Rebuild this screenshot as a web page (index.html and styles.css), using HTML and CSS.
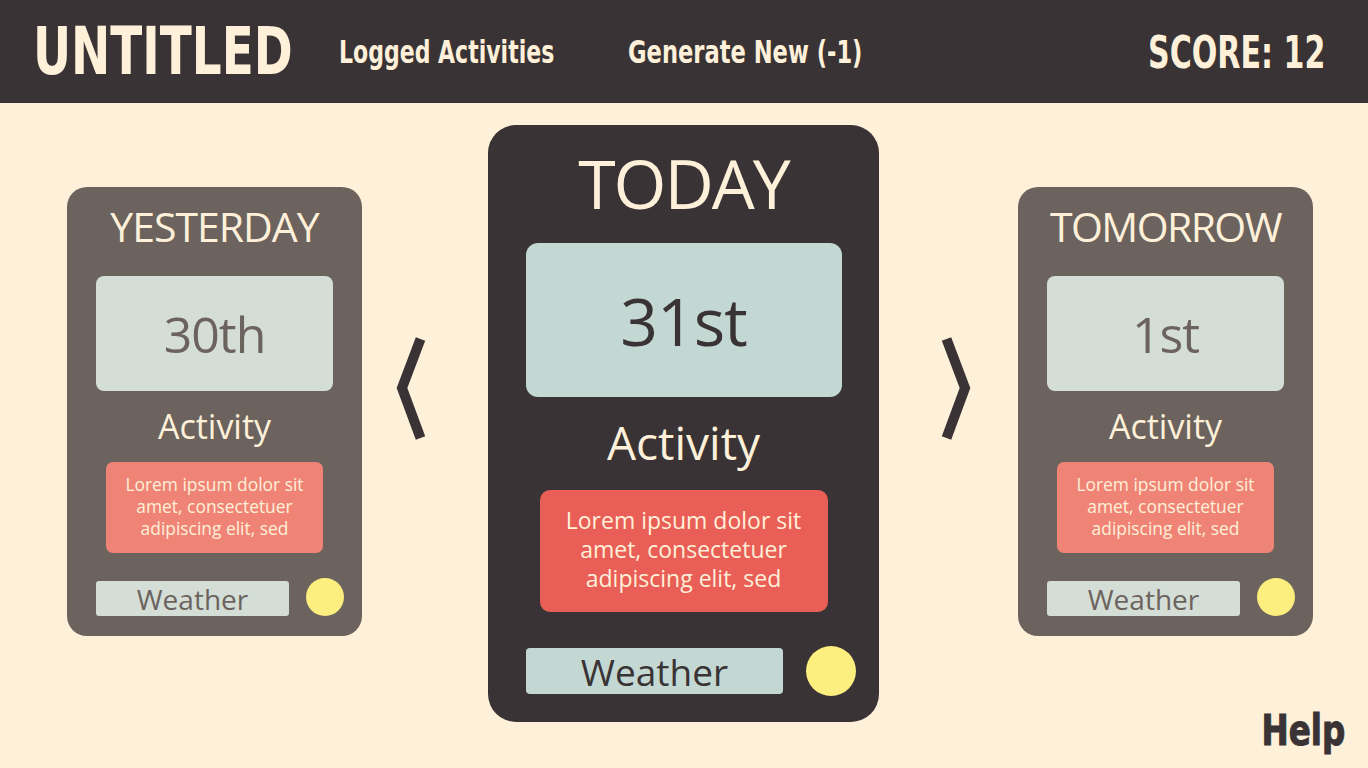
FILE: index.html
```html
<!DOCTYPE html>
<html lang="en">
<head>
<meta charset="utf-8">
<title>Untitled</title>
<link rel="stylesheet" href="styles.css">
</head>
<body>
<header class="topbar">
  <div class="brand"><span class="squeeze">UNTITLED</span></div>
  <nav class="nav">
    <a class="nav-link nav-logged" href="#"><span class="squeeze">Logged Activities</span></a>
    <a class="nav-link nav-generate" href="#"><span class="squeeze">Generate New (-1)</span></a>
  </nav>
  <div class="score"><span class="squeeze squeeze-right">SCORE: 12</span></div>
</header>
<main class="days">
  <section class="card card-side">
    <h2 class="card-title">YESTERDAY</h2>
    <div class="date-box">30th</div>
    <h3 class="activity-label">Activity</h3>
    <div class="activity-box">Lorem ipsum dolor sit<br>amet, consectetuer<br>adipiscing elit, sed</div>
    <div class="weather-row">
      <div class="weather-box">Weather</div>
      <div class="sun"></div>
    </div>
  </section>
  <div class="nav-arrow arrow-left">
    <svg width="40" height="110" viewBox="0 0 40 110"><polyline points="30.5,5 12,54 30.5,104" fill="none" stroke="#393335" stroke-width="10" stroke-linejoin="miter"/></svg>
  </div>
  <section class="card card-main">
    <h2 class="card-title">TODAY</h2>
    <div class="date-box">31st</div>
    <h3 class="activity-label">Activity</h3>
    <div class="activity-box">Lorem ipsum dolor sit<br>amet, consectetuer<br>adipiscing elit, sed</div>
    <div class="weather-row">
      <div class="weather-box">Weather</div>
      <div class="sun"></div>
    </div>
  </section>
  <div class="nav-arrow arrow-right">
    <svg width="40" height="110" viewBox="0 0 40 110"><polyline points="9.5,5 28,54 9.5,104" fill="none" stroke="#393335" stroke-width="10" stroke-linejoin="miter"/></svg>
  </div>
  <section class="card card-side">
    <h2 class="card-title title-tomorrow">TOMORROW</h2>
    <div class="date-box">1st</div>
    <h3 class="activity-label">Activity</h3>
    <div class="activity-box">Lorem ipsum dolor sit<br>amet, consectetuer<br>adipiscing elit, sed</div>
    <div class="weather-row">
      <div class="weather-box">Weather</div>
      <div class="sun"></div>
    </div>
  </section>
</main>
<a class="help" href="#"><span class="squeeze squeeze-right">Help</span></a>
</body>
</html>
```
FILE: styles.css
```css
* { box-sizing: border-box; margin: 0; padding: 0; }

html, body {
  width: 1368px;
  height: 768px;
  overflow: hidden;
}

body {
  background: #fef0d9;
  font-family: "Open Sans", "Noto Sans", sans-serif;
  color: #fef0d9;
  position: relative;
}

.squeeze {
  display: inline-block;
  white-space: nowrap;
  transform-origin: left top;
}

.squeeze-right { transform-origin: right top; }

.topbar {
  height: 103px;
  background: #393335;
  display: flex;
  align-items: flex-start;
  padding: 0 43px 0 33px;
  font-family: "DejaVu Sans Condensed", "DejaVu Sans", sans-serif;
  font-weight: 700;
  color: #fef0d9;
  line-height: 1;
}

.brand {
  width: 306px;
  font-size: 66px;
  margin-top: 19px;
}

.brand .squeeze { transform: scaleX(0.79); }

.nav {
  display: flex;
  margin-top: 36px;
}

.nav-link {
  color: #fef0d9;
  text-decoration: none;
  font-size: 32px;
  line-height: 1;
}

.nav-logged { width: 289px; }
.nav-logged .squeeze { transform: scaleX(0.765); }
.nav-generate .squeeze { transform: scaleX(0.785); }

.score {
  margin-left: auto;
  margin-top: 31px;
  font-size: 44px;
}

.score .squeeze { transform: scaleX(0.76); }

.days {
  display: grid;
  grid-template-columns: 295px 126px 391px 139px 295px;
  align-items: start;
  padding-left: 67px;
}

.card {
  display: flex;
  flex-direction: column;
  align-items: center;
  line-height: 1;
}

.card-side {
  margin-top: 84px;
  height: 449px;
  background: #6c635e;
  border-radius: 20px;
  padding-top: 19px;
}

.card-main {
  margin-top: 22px;
  height: 597px;
  background: #393335;
  border-radius: 28px;
  padding-top: 24px;
}

.card-title {
  font-weight: 400;
  color: #fef0d9;
}

.card-side .card-title { font-size: 41px; letter-spacing: -1px; }
.card-side .title-tomorrow { letter-spacing: -1.6px; }
.card-main .card-title { font-size: 68px; letter-spacing: -2px; }

.date-box {
  display: flex;
  align-items: center;
  justify-content: center;
}

.card-side .date-box {
  margin-top: 29px;
  width: 237px;
  height: 115px;
  border-radius: 8px;
  background: #d4ded6;
  color: #6c635e;
  font-size: 50px;
  letter-spacing: -1px;
}

.card-main .date-box {
  margin-top: 26px;
  width: 316px;
  height: 154px;
  border-radius: 12px;
  background: #c4d8d3;
  color: #393335;
  font-size: 66px;
  letter-spacing: -1px;
}

.activity-label {
  font-weight: 400;
  color: #fef0d9;
}

.card-side .activity-label { margin-top: 18px; font-size: 34px; }
.card-main .activity-label { margin-top: 22px; font-size: 46px; }

.activity-box {
  display: flex;
  align-items: center;
  justify-content: center;
  text-align: center;
  color: #fef0d9;
}

.card-side .activity-box {
  margin-top: 19px;
  width: 217px;
  height: 91px;
  padding-bottom: 4px;
  border-radius: 7px;
  background: #ef8476;
  font-size: 17.4px;
  line-height: 22px;
}

.card-main .activity-box {
  margin-top: 25px;
  width: 288px;
  height: 122px;
  padding-bottom: 4px;
  border-radius: 10px;
  background: #e95e56;
  font-size: 23px;
  line-height: 29px;
}

.weather-row {
  display: flex;
  align-self: stretch;
}

.card-side .weather-row {
  margin-top: 25px;
  align-items: flex-end;
  padding-left: 29px;
  gap: 17px;
}

.card-main .weather-row {
  margin-top: 34px;
  align-items: center;
  padding-left: 38px;
  gap: 23px;
}

.weather-box {
  display: flex;
  align-items: center;
  justify-content: center;
}

.card-side .weather-box {
  width: 193px;
  height: 35px;
  border-radius: 3px;
  background: #d4ded6;
  color: #6c635e;
  font-size: 28px;
}

.card-main .weather-box {
  width: 257px;
  height: 46px;
  border-radius: 4px;
  background: #c4d8d3;
  color: #393335;
  font-size: 37px;
}

.sun {
  border-radius: 50%;
  background: #fcee7f;
}

.card-side .sun { width: 38px; height: 38px; }
.card-main .sun { width: 50px; height: 50px; }

.nav-arrow { display: flex; }
.arrow-left { margin-top: 231px; padding-left: 28px; }
.arrow-right { margin-top: 231px; padding-left: 58px; }

.help {
  position: absolute;
  right: 23px;
  bottom: 16px;
  font-family: "DejaVu Sans Condensed", "DejaVu Sans", sans-serif;
  font-weight: 700;
  font-size: 42px;
  line-height: 1;
  color: #393335;
  text-decoration: none;
  -webkit-text-stroke: 1px #393335;
}

.help .squeeze { transform: scaleX(0.86); }
```
